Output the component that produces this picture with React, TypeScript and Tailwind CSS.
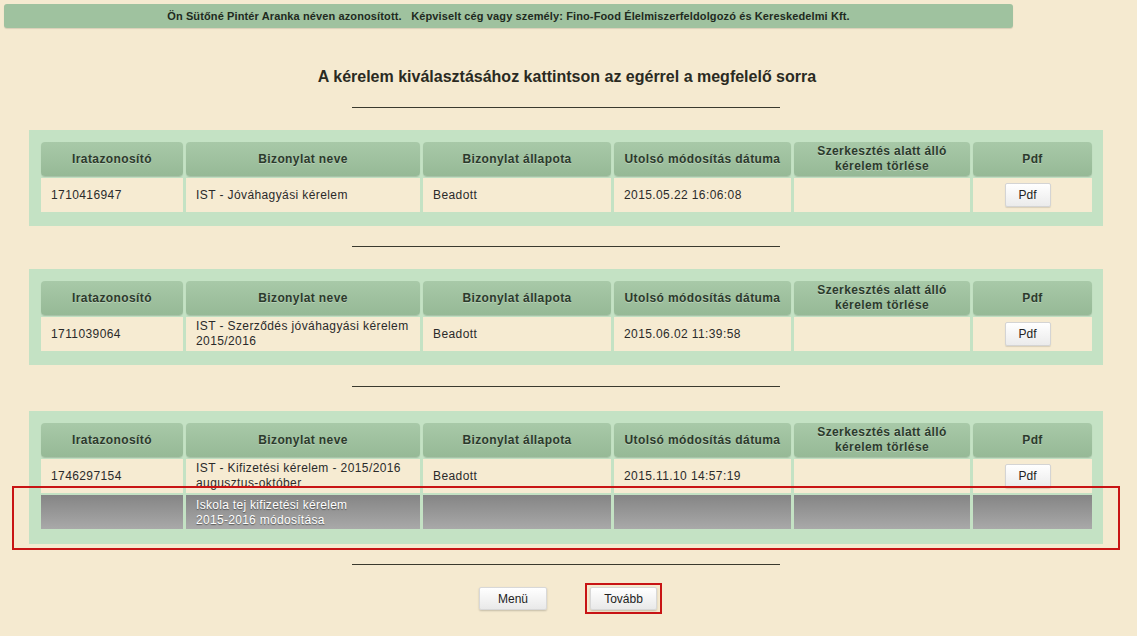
import React from "react";

const COLS = "grid grid-cols-[142px_234px_188px_177px_176px_119px] gap-x-[3px]";

const HEADERS = [
  "Iratazonosító",
  "Bizonylat neve",
  "Bizonylat állapota",
  "Utolsó módosítás dátuma",
  "Szerkesztés alatt álló kérelem törlése",
  "Pdf",
];

type Row = { id: string; name: string[]; status: string; date: string };

const TABLES: Row[][] = [
  [{ id: "1710416947", name: ["IST - Jóváhagyási kérelem"], status: "Beadott", date: "2015.05.22 16:06:08" }],
  [
    {
      id: "1711039064",
      name: ["IST - Szerződés jóváhagyási kérelem", "2015/2016"],
      status: "Beadott",
      date: "2015.06.02 11:39:58",
    },
  ],
  [
    {
      id: "1746297154",
      name: ["IST - Kifizetési kérelem - 2015/2016", "augusztus-október"],
      status: "Beadott",
      date: "2015.11.10 14:57:19",
    },
  ],
];

function Hr() {
  return <div className="ml-[352px] h-px w-[428px] bg-[#3a3a2e]" />;
}

function Header() {
  return (
    <div className={COLS}>
      {HEADERS.map((h) => (
        <div
          key={h}
          className="flex h-[34px] items-center justify-center rounded-[4px] bg-gradient-to-b from-[#a8c9a8] to-[#96b996] px-2 text-center text-[12px] font-bold leading-[15px] tracking-[0.4px] text-[#2c3a2c] shadow-[0_1px_1px_rgba(0,0,0,0.15)] [text-shadow:0_1px_0_rgba(255,255,255,0.3)]"
        >
          {h === HEADERS[4] ? (
            <span>
              Szerkesztés alatt álló
              <br />
              kérelem törlése
            </span>
          ) : (
            h
          )}
        </div>
      ))}
    </div>
  );
}

function DataRow({ r }: { r: Row }) {
  const cell =
    "flex h-[34px] items-center bg-[#f6ebd2] px-[10px] text-[12px] leading-[15px] tracking-[0.4px] text-[#2a2a2a]";
  return (
    <div className={COLS}>
      <div className={cell}>{r.id}</div>
      <div className={cell}>
        <span>
          {r.name.map((n, i) => (
            <React.Fragment key={i}>
              {i > 0 && <br />}
              {n}
            </React.Fragment>
          ))}
        </span>
      </div>
      <div className={cell}>{r.status}</div>
      <div className={cell}>{r.date}</div>
      <div className={cell} />
      <div className="flex h-[34px] items-center justify-center bg-[#f6ebd2] pl-[10px] pr-[20px]">
        <button className="h-[24px] w-[46px] rounded-[2px] border border-[#d4d4d4] bg-gradient-to-b from-[#ffffff] to-[#ebebeb] text-[12px] text-[#222] shadow-[0_1px_1px_rgba(0,0,0,0.12)]">
          Pdf
        </button>
      </div>
    </div>
  );
}

function GreyRow() {
  const cell = "h-[34px] bg-gradient-to-b from-[#858585] to-[#a9a9a9]";
  return (
    <div className={COLS}>
      <div className={cell} />
      <div
        className={`${cell} px-[10px] pt-[3px] text-[12px] leading-[15px] tracking-[0.3px] text-white [text-shadow:0_1px_1px_rgba(0,0,0,0.45)]`}
      >
        Iskola tej kifizetési kérelem
        <br />
        2015-2016 módosítása
      </div>
      <div className={cell} />
      <div className={cell} />
      <div className={cell} />
      <div className={cell} />
    </div>
  );
}

function Panel({ rows, extra }: { rows: Row[]; extra?: boolean }) {
  return (
    <div
      className={`relative ml-[29px] flex w-[1074px] flex-col gap-y-[2px] bg-[#c4e2c4] px-[12px] pt-[12px] ${
        extra ? "pb-[15px]" : "pb-[14px]"
      }`}
    >
      <Header />
      {rows.map((r) => (
        <DataRow key={r.id} r={r} />
      ))}
      {extra && (
        <>
          <GreyRow />
          <div className="pointer-events-none absolute left-[-17px] top-[75px] h-[64px] w-[1108px] border-2 border-[#c81414]" />
        </>
      )}
    </div>
  );
}

export default function App() {
  return (
    <div className="h-[636px] w-[1137px] overflow-hidden bg-[#f5ead0] font-['Liberation_Sans',Arial,sans-serif] text-[#222]">
      <div className="pl-[4px] pt-[4px]">
        <div className="flex h-[24px] w-[1009px] items-center justify-center rounded-[3px] bg-[#9fc29f] text-[11px] font-bold tracking-[0.12px] text-[#1e2a1e] shadow-[0_1px_1px_rgba(0,0,0,0.12)]">
          Ön Sütőné Pintér Aranka néven azonosított.&nbsp;&nbsp; Képviselt cég vagy személy: Fino-Food Élelmiszerfeldolgozó és Kereskedelmi Kft.
        </div>
      </div>

      <h1 className="mt-[39px] w-[1134px] text-center text-[16px] font-bold leading-[20px] text-[#2a2a22]">
        A kérelem kiválasztásához kattintson az egérrel a megfelelő sorra
      </h1>

      <div className="mt-[20px]">
        <Hr />
      </div>
      <div className="mt-[22px]">
        <Panel rows={TABLES[0]} />
      </div>
      <div className="mt-[20px]">
        <Hr />
      </div>
      <div className="mt-[22px]">
        <Panel rows={TABLES[1]} />
      </div>
      <div className="mt-[21px]">
        <Hr />
      </div>
      <div className="mt-[24px]">
        <Panel rows={TABLES[2]} extra />
      </div>
      <div className="mt-[20px]">
        <Hr />
      </div>

      <div className="mt-[18px] flex items-center pl-[479px]">
        <button className="h-[23px] w-[68px] rounded-[2px] border border-[#d8d8d8] bg-gradient-to-b from-[#ffffff] to-[#e9e9e9] text-[12px] text-[#222] shadow-[0_1px_2px_rgba(0,0,0,0.2)]">
          Menü
        </button>
        <div className="ml-[38px] border-2 border-[#c81414] px-[3px] py-[2px]">
          <button className="block h-[23px] w-[67px] rounded-[2px] border border-[#d8d8d8] bg-gradient-to-b from-[#ffffff] to-[#e9e9e9] text-[12px] text-[#222] shadow-[0_1px_2px_rgba(0,0,0,0.2)]">
            Tovább
          </button>
        </div>
      </div>
    </div>
  );
}
